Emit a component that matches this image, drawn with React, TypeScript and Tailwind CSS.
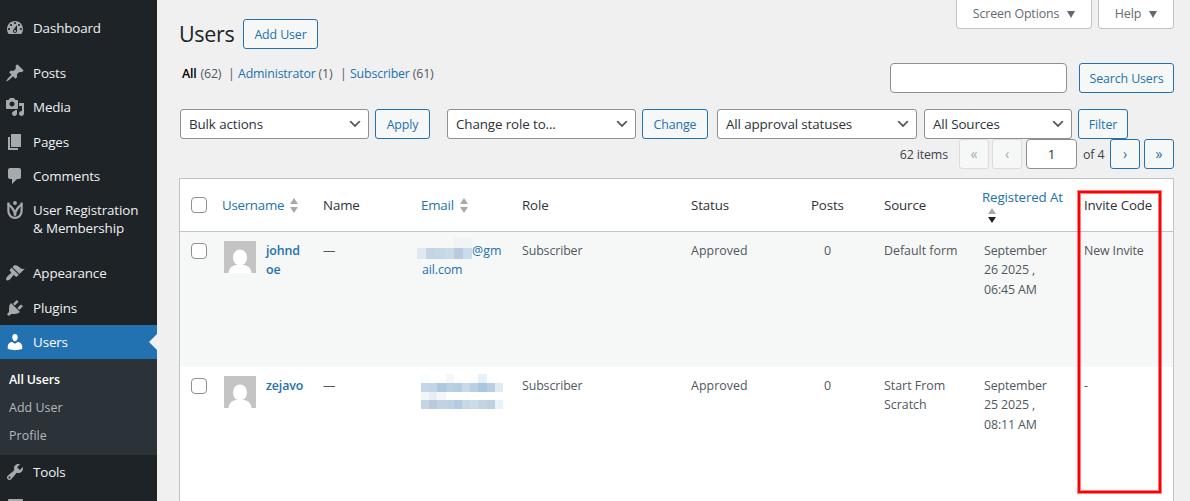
import type { ReactNode } from 'react';

interface MenuItem {
  label: string;
  icon: ReactNode;
  gapBefore?: boolean;
  current?: boolean;
}

interface UserRow {
  username: string;
  email: ReactNode;
  registered: string[];
  source: string;
  inviteCode: string;
}

const Dashicon = ({ d }: { d: string }) => (
  <svg viewBox="0 0 20 20" className="size-5" fill="currentColor">
    <path d={d} />
  </svg>
);

const menu: MenuItem[] = [
  {
    label: 'Dashboard',
    icon: (
      <Dashicon d="M3.76 16h12.48c1.1-1.37 1.76-3.11 1.76-5 0-4.42-3.58-8-8-8s-8 3.58-8 8c0 1.89.66 3.63 1.76 5zM10 4c.55 0 1 .45 1 1s-.45 1-1 1-1-.45-1-1 .45-1 1-1zM6 6c.55 0 1 .45 1 1s-.45 1-1 1-1-.45-1-1 .45-1 1-1zm8 0c.55 0 1 .45 1 1s-.45 1-1 1-1-.45-1-1 .45-1 1-1zm-5.37 5.55L12 7v6c0 1.1-.9 2-2 2s-2-.9-2-2c0-.57.24-1.08.63-1.45zM4 10c.55 0 1 .45 1 1s-.45 1-1 1-1-.45-1-1 .45-1 1-1zm12 0c.55 0 1 .45 1 1s-.45 1-1 1-1-.45-1-1 .45-1 1-1zm-5 3c0-.55-.45-1-1-1s-1 .45-1 1 .45 1 1 1 1-.45 1-1z" />
    ),
  },
  {
    label: 'Posts',
    gapBefore: true,
    icon: (
      <Dashicon d="M10.44 3.02l1.82-1.82 6.36 6.35-1.83 1.82c-1.05-.68-2.48-.57-3.41.36l-.75.75c-.92.93-1.04 2.35-.35 3.41l-1.83 1.82-2.41-2.41-2.8 2.79c-.42.42-3.38 2.71-3.8 2.29s1.86-3.39 2.28-3.81l2.79-2.79L4.1 9.36l1.83-1.82c1.05.69 2.48.57 3.4-.36l.75-.75c.93-.92 1.05-2.35.36-3.41z" />
    ),
  },
  {
    label: 'Media',
    icon: (
      <Dashicon d="M13 11V4c0-.55-.45-1-1-1h-1.67L9 1H5L3.67 3H2c-.55 0-1 .45-1 1v7c0 .55.45 1 1 1h10c.55 0 1-.45 1-1zM7 4.5c1.38 0 2.5 1.12 2.5 2.5S8.38 9.500 7 9.500 4.500 8.380 4.500 7 5.620 4.500 7 4.500zM14 6h5v10.5c0 1.38-1.12 2.5-2.5 2.5S14 17.88 14 16.5s1.12-2.5 2.5-2.5c.17 0 .34.02.5.05V9h-3V6zm-4 8.05V13h2v3.5c0 1.38-1.12 2.5-2.5 2.5S7 17.88 7 16.5 8.12 14 9.500 14c.17 0 .34.02.5.05z" />
    ),
  },
  { label: 'Pages', icon: <Dashicon d="M6 15V2h10v13H6zm-1 1h8v2H3V5h2v11z" /> },
  {
    label: 'Comments',
    icon: (
      <Dashicon d="M5 2h9c1.1 0 2 .9 2 2v7c0 1.1-.9 2-2 2h-2l-5 5v-5H5c-1.1 0-2-.9-2-2V4c0-1.1.9-2 2-2z" />
    ),
  },
  {
    label: 'User Registration & Membership',
    icon: (
      <svg viewBox="0 0 20 20" className="size-5" fill="none" stroke="currentColor" strokeWidth="2.2">
        <circle cx="10" cy="3" r="1.9" fill="currentColor" stroke="none" />
        <path d="M3.400 2.400v8.600c0 4.200 3 6.900 6.600 6.900s6.600-2.700 6.600-6.900V2.400" />
        <path d="M3 4c1.500 1.200 2.400 2 3.600 3.300 1.800 2 3.200 4.200 3.400 8.300.2-4.100 1.600-6.300 3.400-8.300 1.200-1.300 2.100-2.100 3.600-3.300" />
      </svg>
    ),
  },
  {
    label: 'Appearance',
    gapBefore: true,
    icon: (
      <Dashicon d="M14.48 11.06L7.41 3.99l1.5-1.5c.5-.56 2.3-.47 3.51.32 1.21.8 1.43 1.28 2.91 2.1 1.18.64 2.45 1.26 4.45.85zm-.71.71L6.7 4.7 4.93 6.47c-.39.39-.39 1.02 0 1.41l1.06 1.06c.39.39.39 1.03 0 1.42-.6.6-1.43 1.11-2.21 1.69-.35.26-.7.53-1.01.84C1.43 14.23.4 16.08 1.4 17.07c.99 1 2.84-.03 4.18-1.36.31-.31.58-.66.85-1.02.57-.78 1.08-1.61 1.69-2.21.39-.39 1.02-.39 1.41 0l1.06 1.06c.39.39 1.02.39 1.41 0z" />
    ),
  },
  {
    label: 'Plugins',
    icon: (
      <Dashicon d="M13.11 4.36L9.87 7.6 8 5.73l3.24-3.24c.35-.34 1.05-.2 1.56.32.52.51.66 1.21.31 1.55zm-8 1.77l.91-1.12 9.01 9.01-1.19.84c-.71.71-2.63 1.16-3.82 1.16H6.14L4.9 17.26c-.59.59-1.54.59-2.12 0-.59-.58-.59-1.53 0-2.12l1.24-1.24v-3.88c0-1.13.4-3.19 1.09-3.89zm7.26 3.97l3.24-3.24c.34-.35 1.04-.21 1.55.31.52.51.66 1.21.31 1.55l-3.24 3.25z" />
    ),
  },
  {
    label: 'Users',
    current: true,
    icon: (
      <Dashicon d="M10 9.25c-2.27 0-2.73-3.44-2.73-3.44C7 4.02 7.82 2 9.97 2c2.16 0 2.98 2.02 2.71 3.81 0 0-.41 3.44-2.68 3.44zm0 2.57L12.72 10c2.39 0 4.52 2.33 4.52 4.53v2.49s-3.65 1.13-7.24 1.13c-3.65 0-7.24-1.13-7.24-1.13v-2.49c0-2.25 1.94-4.48 4.47-4.48z" />
    ),
  },
  {
    label: 'Tools',
    icon: (
      <Dashicon d="M16.68 9.77c-1.34 1.34-3.3 1.67-4.95.99l-5.41 6.52c-.99.99-2.59.99-3.58 0s-.99-2.59 0-3.57l6.52-5.42c-.68-1.65-.35-3.61.99-4.95 1.28-1.28 3.12-1.62 4.72-1.06l-2.89 2.89 2.82 2.82 2.86-2.87c.53 1.58.18 3.39-1.08 4.65zM3.81 16.21c.4.39 1.04.39 1.43 0 .4-.4.4-1.04 0-1.43-.39-.4-1.03-.4-1.43 0-.39.39-.39 1.03 0 1.43z" />
    ),
  },
];

function Sidebar() {
  return (
    <nav className="w-[157px] shrink-0 bg-[#1d2327] pt-[11px] text-[13.4px] leading-[18.2px] tracking-[-0.01em] text-[#f0f0f1]">
      {menu.map((item) => (
        <div key={item.label} className={item.gapBefore ? 'pt-[11px]' : ''}>
          <div className={`flex ${item.current ? 'bg-[#2271b1] text-white' : ''}`}>
            <span className={`w-[33px] shrink-0 pt-[7px] pl-[5px] ${item.current ? 'text-white' : 'text-[#a7aaad]'}`}>
              {item.icon}
            </span>
            <span className="w-[113px] py-2">{item.label}</span>
            {item.current && (
              <svg viewBox="0 0 8 16" className="ml-auto h-4 w-2 self-center" fill="#f0f0f1">
                <path d="M8 0v16L0 8z" />
              </svg>
            )}
          </div>
          {item.current && (
            <div className="bg-[#2c3338] pt-[7px] pb-1 pl-[9px] text-[12.4px] text-[#b4b9be]">
              <div className="py-[5px] font-semibold text-white">All Users</div>
              <div className="py-[5px] tracking-[0.005em]">Add User</div>
              <div className="py-[5px] tracking-[0.005em]">Profile</div>
            </div>
          )}
        </div>
      ))}
      {/* Settings, cut off by the window edge */}
      <div className="pt-2.5 pl-2">
        <div className="h-4 w-[15px] rounded-t-[1px] bg-[#a7aaad]"></div>
      </div>
    </nav>
  );
}

function Button({ className, children }: { className: string; children: ReactNode }) {
  return (
    <button
      className={`h-[30px] shrink-0 rounded-[3px] border border-[#2271b1] bg-[#f6f7f7] text-center text-[#2271b1] ${className}`}
    >
      {children}
    </button>
  );
}

function Select({ className, label }: { className: string; label: string }) {
  return (
    <div
      className={`flex h-[30px] shrink-0 items-center justify-between rounded-[3px] border border-[#8c8f94] bg-white pr-[5px] pl-2 text-[13.4px] text-[#2c3338] ${className}`}
    >
      {label}
      <svg viewBox="0 0 20 20" className="size-4" fill="#555">
        <path d="M5 6l5 5 5-5 2 1-7 7-7-7 2-1z" />
      </svg>
    </div>
  );
}

function Sorter({ desc }: { desc?: boolean }) {
  return (
    <svg viewBox="0 0 8 15" className="h-[15px] w-2">
      <path d="M4 0l4 6H0z" fill="#a7aaad" />
      <path d="M0 9h8l-4 6z" fill={desc ? '#1d2327' : '#a7aaad'} />
    </svg>
  );
}

const Checkbox = () => <div className="size-4 rounded-[4px] border border-[#8c8f94] bg-white"></div>;

const Avatar = () => (
  <svg viewBox="0 0 32 32" className="size-8 shrink-0">
    <path d="M0 0h32v32H0z" fill="#c4c4c4" />
    <ellipse cx="16" cy="16.500" rx="7" ry="8" fill="#fff" />
    <path d="M4.500 32c.5-5 3.500-7.500 8-8h7c4.500.5 7.500 3 8 8z" fill="#fff" />
  </svg>
);

function MaskedRow({ colors, className }: { colors: string[]; className: string }) {
  return (
    <div className={`flex ${className}`}>
      {colors.map((color, i) => (
        <div key={i} className="flex-1" style={{ backgroundColor: color }}></div>
      ))}
    </div>
  );
}

const rows: UserRow[] = [
  {
    username: 'johnd oe',
    email: (
      <>
        <div className="-ml-1 flex items-start tracking-[0.01em]">
          <div className="relative mt-[7px] w-[55px]">
            <MaskedRow className="h-[11px]" colors={['#e1e8f0', '#c1d5e3', '#c4d7e5', '#cbdae7', '#b9cbde', '#c9dce9']} />
            <div className="absolute -top-[11px] left-[37px] h-[11px] w-[18px] bg-[#f1f3f5]"></div>
          </div>
          @gm
        </div>
        <div className="-mt-[1px] pl-[1px]">ail.com</div>
      </>
    ),
    registered: ['September', '26 2025 ,', '06:45 AM'],
    source: 'Default form',
    inviteCode: 'New Invite',
  },
  {
    username: 'zejavo',
    email: (
      <div className="-mt-0.5 w-[82px]">
        <MaskedRow className="h-[9px]" colors={['#fbfcfd', '#fff', '#fff', '#f4f8fb', '#fff', '#fff', '#fdfdfd', '#e9f1f8', '#fff', '#fff']} />
        <MaskedRow className="h-[9px]" colors={['#c4d5e7', '#c2d5e6', '#aec8df', '#b9cfe2', '#b4cfe4', '#cdd8e6', '#b8d0e3', '#abc7de', '#b9cfe1', '#deebf3']} />
        <MaskedRow className="h-2" colors={['#f3f6f8', '#e9eef5', '#f3f7fa', '#fefefe', '#fefefe', '#fcfdfd', '#fff', '#fff', '#fff', '#fff']} />
        <MaskedRow className="h-[9px]" colors={['#c3d5e5', '#bac9de', '#c0d3e4', '#bed2e4', '#b3cae2', '#c6d8e7', '#cddbe9', '#c1d4e2', '#bdd1e1', '#e9f1f9']} />
      </div>
    ),
    registered: ['September', '25 2025 ,', '08:11 AM'],
    source: 'Start From Scratch',
    inviteCode: '-',
  },
];

const columns = 'grid grid-cols-[42px_101px_98px_101px_169px_120px_73px_98px_102px_89px]';

function UsersTable() {
  return (
    <div className="relative mt-[9px] w-[995px] border border-[#c3c4c7] bg-white">
      <div className={`${columns} h-[53px] items-center border-b border-[#c3c4c7] text-[13.3px] text-[#2c3338]`}>
        <div className="pl-[11px]">
          <Checkbox />
        </div>
        <div className="flex items-start gap-1.5 tracking-[-0.02em] text-[#2271b1]">
          <span className="pt-0.5">Username</span>
          <span className="pt-1">
            <Sorter />
          </span>
        </div>
        <div className="pt-0.5">Name</div>
        <div className="flex items-start gap-1.5 tracking-[-0.015em] text-[#2271b1]">
          <span className="pt-0.5">Email</span>
          <span className="pt-1">
            <Sorter />
          </span>
        </div>
        <div className="pt-0.5">Role</div>
        <div className="pt-0.5">Status</div>
        <div className="pt-0.5">Posts</div>
        <div className="pt-0.5">Source</div>
        <div className="leading-[18px] text-[#2271b1]">
          <div>Registered At</div>
          <div className="pt-0.5 pl-1.5">
            <Sorter desc />
          </div>
        </div>
        <div className="pt-0.5">Invite Code</div>
      </div>
      {rows.map((row, i) => (
        <div
          key={row.username}
          className={`${columns} h-[135px] pt-[9px] leading-[19.500px] text-[#50575e] ${i % 2 === 0 ? 'bg-[#f6f7f7]' : 'bg-white'}`}
        >
          <div className="pt-0.5 pl-[11px]">
            <Checkbox />
          </div>
          <div className="flex gap-2.5 pl-0.5 text-[#2271b1]">
            <Avatar />
            <strong className="w-9 leading-[19px] font-semibold">{row.username}</strong>
          </div>
          <div>—</div>
          <div className="text-[#2271b1]">{row.email}</div>
          <div>Subscriber</div>
          <div className="tracking-[0.005em]">Approved</div>
          <div className="w-[33px] text-center">0</div>
          <div className="w-[78px] leading-[19px] tracking-normal">{row.source}</div>
          <div className="pl-0.5">
            {row.registered.map((line) => (
              <div key={line} className="leading-[19.3px]">
                {line}
              </div>
            ))}
          </div>
          <div>{row.inviteCode}</div>
        </div>
      ))}
      {/* Invite code highlight */}
      <div className="absolute top-3 left-[898px] h-[302px] w-[83px] border-2 border-[#f00] shadow-[0_0_0_1px_#ff000080,inset_0_0_0_1px_#ff000080]"></div>
    </div>
  );
}

export default function App() {
  return (
    <div className="flex h-[501px] w-[1190px] overflow-hidden bg-[#f0f0f1] font-['Open_Sans','Noto_Sans',sans-serif] text-[12.4px] tracking-[-0.01em] text-[#3c434a]">
      <Sidebar />
      <main className="w-[1033px] shrink-0 pl-[22px]">
        <header className="flex h-[49px] w-[995px] justify-between">
          <div className="flex items-center gap-[9px] self-end">
            <h1 className="w-[55px] pb-[1px] text-[21.500px] leading-[29px] tracking-[-0.015em] text-[#1d2327]">Users</h1>
            <Button className="w-[75px] pt-0.5">Add User</Button>
          </div>
          <div className="flex h-[29px] gap-1.5 text-[#646970]">
            <div className="flex w-[136px] items-center justify-center gap-2 rounded-b-[4px] border border-t-0 border-[#c3c4c7] bg-white">
              Screen Options
              <svg viewBox="0 0 8 7" className="h-[7px] w-2" fill="currentColor">
                <path d="M0 0h8L4 7z" />
              </svg>
            </div>
            <div className="flex w-[76px] items-center justify-center gap-2 rounded-b-[4px] border border-t-0 border-[#c3c4c7] bg-white">
              Help
              <svg viewBox="0 0 8 7" className="h-[7px] w-2" fill="currentColor">
                <path d="M0 0h8L4 7z" />
              </svg>
            </div>
          </div>
        </header>

        <div className="mt-3.5 flex w-[995px] items-start justify-between">
          <div className="flex pt-[1px] pl-[3px] leading-5 tracking-[-0.015em] text-[#50575e]">
            <span className="w-[46px] whitespace-nowrap">
              <strong className="mr-[1px] font-semibold text-black">All</strong> (62)
            </span>
            <span className="w-2.5">|</span>
            <span className="w-[102px] whitespace-nowrap">
              <span className="text-[#2271b1]">Administrator</span> (1)
            </span>
            <span className="w-2.5">|</span>
            <span>
              <span className="text-[#2271b1]">Subscriber</span> (61)
            </span>
          </div>
          <div className="flex gap-3">
            <div className="h-[30px] w-[177px] rounded-[4px] border border-[#8c8f94] bg-white"></div>
            <Button className="w-[95px] pt-0.5">Search Users</Button>
          </div>
        </div>

        <div className="mt-4 flex pl-[1px]">
          <Select className="mr-1.5 w-[189px]" label="Bulk actions" />
          <Button className="mr-[17px] w-[55px] pt-0.5">Apply</Button>
          <Select className="mr-1.5 w-[189px]" label="Change role to..." />
          <Button className="mr-[9px] w-[66px] pt-0.5">Change</Button>
          <Select className="mr-[7px] w-[200px] tracking-[-0.01em]" label="All approval statuses" />
          <Select className="mr-1.5 w-[148px]" label="All Sources" />
          <Button className="w-[50px] pt-0.5">Filter</Button>
        </div>

        <div className="flex w-[995px] items-center justify-end">
          <span className="mr-[11px] pt-0.5">62 items</span>
          <div className="mr-[3px] h-[30px] w-[30px] rounded-[3px] border border-[#dcdcde] bg-[#f6f7f7] text-center text-[14px] leading-[27px] text-[#a7aaad]">
            «
          </div>
          <div className="mr-1 h-[30px] w-[30px] rounded-[3px] border border-[#dcdcde] bg-[#f6f7f7] text-center text-[14px] leading-[27px] text-[#a7aaad]">
            ‹
          </div>
          <div className="mr-1.5 h-[30px] w-[51px] rounded-[4px] border border-[#8c8f94] bg-white text-center text-[13.3px] leading-7 text-[#2c3338]">
            1
          </div>
          <span className="mr-1 w-[23px] pt-0.5 whitespace-nowrap">of 4</span>
          <Button className="mr-1 w-[30px] pb-[1px] text-[14px]">›</Button>
          <Button className="w-[30px] pb-[1px] text-[14px]">»</Button>
        </div>

        <UsersTable />
      </main>
    </div>
  );
}
